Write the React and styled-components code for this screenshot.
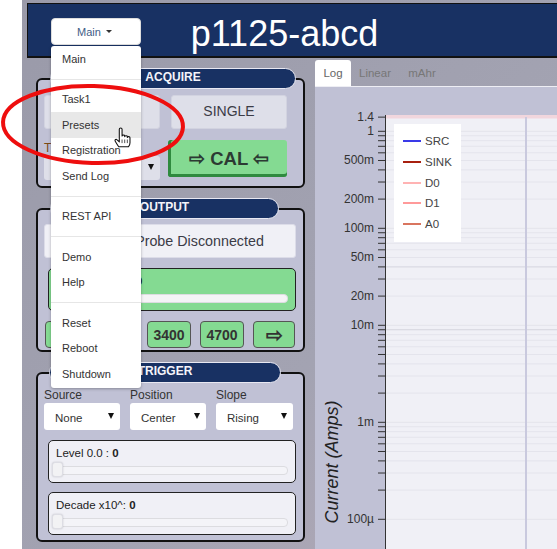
import React from "react";
import styled, { createGlobalStyle } from "styled-components";

const Global = createGlobalStyle`
  html, body { margin: 0; padding: 0; background: #fff; }
  * { box-sizing: border-box; }
  body { font-family: "Liberation Sans", Arial, sans-serif; }
`;

const Page = styled.div`
  position: relative;
  width: 557px;
  height: 549px;
  overflow: hidden;
  background: #fff;
  padding-left: 22px;
`;
const Shell = styled.div`
  width: 535px;
  height: 549px;
  padding: 3px 0 0 5px;
  background: linear-gradient(135deg, #9a9aa9 0%, #a3a3b2 60%, #b4aab8 100%);
  display: flex;
  flex-direction: column;
`;
const Header = styled.header`
  height: 55px;
  flex: none;
  background: #183163;
  border: 1px solid #111;
  border-right: none;
  border-bottom-width: 2px;
  display: flex;
  align-items: center;
  justify-content: center;
  padding: 8px 16px 0 0;
`;
const Title = styled.h1`
  margin: 0;
  font-weight: 400;
  font-size: 36px;
  color: #fff;
`;
const Columns = styled.div`
  flex: 1;
  display: flex;
  min-height: 0;
`;
const Sidebar = styled.aside`
  width: 288px;
  flex: none;
  padding: 20px 0 0 9px;
  display: flex;
  flex-direction: column;
  gap: 20px;
`;
const Panel = styled.section`
  width: 269px;
  height: ${(p) => p.$h}px;
  background: #c0c1d5;
  border: 2px solid #111;
  border-radius: 6px;
  padding: 0 7px 0 6px;
  display: flex;
  flex-direction: column;
`;
const PanelTitle = styled.div`
  flex: none;
  width: ${(p) => p.$w}px;
  height: 21px;
  margin: -12px 0 1px ${(p) => p.$left}px;
  background: #183163;
  border: 1px solid #e8e8f2;
  border-radius: 10.5px;
  color: #f4f4fa;
  font-size: 12px;
  font-weight: 700;
  line-height: 17px;
  text-align: center;
`;
const AcquireGrid = styled.div`
  display: grid;
  grid-template-columns: 116px 116px;
  column-gap: 11px;
  margin-top: 5px;
`;
const GrayButton = styled.div`
  height: 34px;
  background: #dedfe9;
  border: 1px solid #d2d3e0;
  border-radius: 3px;
  color: #3b3b46;
  font-size: 14px;
  padding-bottom: 2px;
  display: flex;
  align-items: center;
  justify-content: center;
`;
const Field = styled.div`
  display: flex;
  flex-direction: column;
`;
const AcquireField = styled(Field)`
  margin-top: 11px;
`;
const Label = styled.label`
  font-size: 12px;
  line-height: 16px;
  height: 16px;
  color: ${(p) => p.$color || "#333"};
`;
const Select = styled.div`
  position: relative;
  width: ${(p) => p.$w || 116}px;
  height: ${(p) => p.$h || 27}px;
  background: ${(p) => p.$bg || "#fff"};
  border-radius: 3px;
  color: #333;
  font-size: 11.5px;
  padding: 2px 0 0 11px;
  display: flex;
  align-items: center;
  &::after {
    content: "";
    position: absolute;
    right: 6px;
    top: 50%;
    margin-top: -4px;
    border-left: 3.5px solid transparent;
    border-right: 3.5px solid transparent;
    border-top: 6px solid #111;
  }
`;
const CalButton = styled.div`
  width: 119px;
  height: 37px;
  margin: 11px 0 0 -3px;
  background: #84da92;
  border-radius: 3px;
  box-shadow: inset 3px 0 0 #2f8a3f, inset 0 -3px 0 #2f8a3f;
  color: #2c3a33;
  font-size: 18.5px;
  font-weight: 700;
  display: flex;
  align-items: center;
  justify-content: center;
  padding-left: 3px;
`;
const StatusBox = styled.div`
  width: 252px;
  height: 34px;
  margin-top: 4px;
  background: #f0f0f6;
  border: 1px solid #dcdce8;
  border-radius: 3px;
  color: #3b3b46;
  font-size: 14.3px;
  display: flex;
  align-items: center;
  justify-content: center;
  padding-left: 59px;
`;
const SliderCard = styled.div`
  position: relative;
  width: 248px;
  height: 43px;
  margin: ${(p) => p.$mt}px 0 0 4px;
  flex: none;
  background: ${(p) => (p.$green ? "#84da92" : "#f0f0f6")};
  border: 1px solid #222;
  border-radius: 5px;
  padding: 6px 7px 0 7px;
  font-size: 11.5px;
  line-height: 13px;
  color: #222;
  b { font-weight: 700; }
`;
const Track = styled.div`
  margin-top: 6px;
  height: 9px;
  background: ${(p) => (p.$green ? "#f4f4f6" : "#f4f4f8")};
  border: 1px solid #dcdce0;
  border-radius: 4px;
`;
const Thumb = styled.div`
  position: absolute;
  left: 3px;
  bottom: 5px;
  width: 11px;
  height: 15px;
  background: #f2f2f4;
  border: 1px solid #dddde4;
  border-radius: 3px;
  box-shadow: 0 0 2px rgba(0, 0, 0, 0.18);
`;
const ButtonRow = styled.div`
  display: flex;
  gap: 9px;
  margin: 10px 0 0 1px;
`;
const GreenButton = styled.div`
  width: ${(p) => p.$w}px;
  height: 27px;
  background: #84da92;
  border: 1px solid #555;
  border-radius: 4px;
  color: #333;
  font-weight: 700;
  font-size: ${(p) => (p.$arrow ? 20 : 14)}px;
  display: flex;
  align-items: center;
  justify-content: center;
`;
const TriggerGrid = styled.div`
  display: flex;
  gap: 10px;
  margin-top: 3px;
`;
const PlotColumn = styled.main`
  flex: 1;
  min-width: 0;
  display: flex;
  flex-direction: column;
`;
const Tabs = styled.nav`
  flex: none;
  height: 29px;
  padding-top: 2px;
  display: flex;
  border-bottom: 1px solid #eeeef4;
`;
const Tab = styled.div`
  height: 26px;
  width: ${(p) => p.$w}px;
  font-size: 11.5px;
  display: flex;
  align-items: center;
  justify-content: center;
  color: ${(p) => (p.$active ? "#666" : "#777")};
  background: ${(p) => (p.$active ? "#fff" : "transparent")};
  border-radius: 3px 3px 0 0;
`;
const PlotArea = styled.div`
  position: relative;
  flex: 1;
  background: #c0c1d5;
  min-height: 0;
`;
const Chart = styled.svg`
  display: block;
  width: 242px;
  height: 462px;
`;
const Legend = styled.div`
  position: absolute;
  left: 79px;
  top: 37px;
  width: 67px;
  height: 118px;
  background: #fff;
  padding: 7px 0 0 9px;
  display: flex;
  flex-direction: column;
`;
const LegendRow = styled.div`
  height: 20.7px;
  display: flex;
  align-items: center;
  gap: 4px;
  font-size: 11.5px;
  color: #444;
`;
const Swatch = styled.span`
  width: 18px;
  height: 2px;
  background: ${(p) => p.$c};
`;
const Dropdown = styled.div`
  position: absolute;
  left: 51px;
  top: 18px;
  width: 90px;
  z-index: 2;
`;
const MainButton = styled.div`
  height: 27px;
  background: #fff;
  border: 1px solid #ddd;
  border-radius: 4px;
  color: #3f5d86;
  font-size: 11px;
  padding-right: 3px;
  display: flex;
  align-items: center;
  justify-content: center;
  gap: 5px;
  &::after {
    content: "";
    border-left: 3.5px solid transparent;
    border-right: 3.5px solid transparent;
    border-top: 3.5px solid #333;
  }
`;
const Menu = styled.div`
  margin-top: 1px;
  height: 342px;
  background: #fff;
  border-radius: 3px;
  box-shadow: 0 1px 3px rgba(0, 0, 0, 0.3);
`;
const MenuItem = styled.div`
  height: 25.5px;
  padding-left: 11px;
  font-size: 11px;
  color: #333;
  display: flex;
  align-items: center;
  background: ${(p) => (p.$active ? "#e8e8e8" : "transparent")};
`;
const Divider = styled.div`
  height: 1px;
  margin: 7px 0;
  background: #e6e6e6;
`;
const Overlay = styled.svg`
  position: absolute;
  left: 0;
  top: 80px;
  width: 190px;
  height: 90px;
  z-index: 3;
  pointer-events: none;
`;

const y = (v) => 131.3 - 97 * Math.log10(v) - 87;
const ticks = [1.4];
for (const d of [1, 0.1, 0.01, 0.001, 0.0001]) {
  for (let k = 1; k <= 9; k++) {
    const v = k * d;
    if (v <= 1.0001 && y(v) < 462) ticks.push(v);
  }
}
const labels = [
  ["1.4", 1.4], ["1", 1], ["500m", 0.5], ["200m", 0.2], ["100m", 0.1],
  ["50m", 0.05], ["20m", 0.02], ["10m", 0.01], ["1m", 0.001], ["100µ", 0.0001],
];
const legend = [
  ["SRC", "#3a3ae8"], ["SINK", "#a8200f"], ["D0", "#ffb3b3"],
  ["D1", "#ff9a9a"], ["A0", "#d9755f"],
];

function Hand() {
  return (
    <g transform="translate(114.5 47.5) scale(1.2)" fill="#fff" stroke="#111" strokeWidth=".9" strokeLinejoin="round">
      <path d="M4 1.5c0-1.4 2.3-1.4 2.3 0V7c0-1 2.2-1 2.2 0v.6c0-1 2.2-1 2.2 0v.7c0-1 2.2-.9 2.2.2v4.2c0 1.6-.6 2.6-1.2 3.3H3.5C2.8 15 1.8 13.4.6 11.4c-.7-1.2.8-2.1 1.6-1.1L4 12z" />
      <path d="M6.3 10v3M8.5 10v3M10.7 10v3" fill="none" strokeWidth=".6" />
    </g>
  );
}

export default function App() {
  return (
    <Page>
      <Global />
      <Shell>
        <Header>
          <Title>p1125-abcd</Title>
        </Header>
        <Columns>
          <Sidebar>
            <Panel $h={110}>
              <PanelTitle $w={246} $left={6}>ACQUIRE</PanelTitle>
              <AcquireGrid>
                <GrayButton>RUN</GrayButton>
                <GrayButton>SINGLE</GrayButton>
                <AcquireField>
                  <Label $color="#7a4a14">Trace</Label>
                  <Select $h={24} $bg="#dedfe9">None</Select>
                </AcquireField>
                <CalButton>⇨ CAL ⇦</CalButton>
              </AcquireGrid>
            </Panel>
            <Panel $h={144}>
              <PanelTitle $w={229} $left={6}>OUTPUT</PanelTitle>
              <StatusBox>Probe Disconnected</StatusBox>
              <SliderCard $green $mt={10}>
                Voltage 0.000 : <b>0</b>
                <Track $green />
                <Thumb />
              </SliderCard>
              <ButtonRow>
                <GreenButton $w={40} $arrow>⇦</GreenButton>
                <GreenButton $w={44}>1800</GreenButton>
                <GreenButton $w={44}>3400</GreenButton>
                <GreenButton $w={44}>4700</GreenButton>
                <GreenButton $w={42} $arrow>⇨</GreenButton>
              </ButtonRow>
            </Panel>
            <Panel $h={170}>
              <PanelTitle $w={232} $left={5}>TRIGGER</PanelTitle>
              <TriggerGrid>
                <Field>
                  <Label>Source</Label>
                  <Select $w={76}>None</Select>
                </Field>
                <Field>
                  <Label>Position</Label>
                  <Select $w={76}>Center</Select>
                </Field>
                <Field>
                  <Label>Slope</Label>
                  <Select $w={77}>Rising</Select>
                </Field>
              </TriggerGrid>
              <SliderCard $mt={10}>
                Level 0.0 : <b>0</b>
                <Track />
                <Thumb />
              </SliderCard>
              <SliderCard $mt={9}>
                Decade x10^: <b>0</b>
                <Track />
                <Thumb />
              </SliderCard>
            </Panel>
          </Sidebar>
          <PlotColumn>
            <Tabs>
              <Tab $w={36} $active>Log</Tab>
              <Tab $w={48}>Linear</Tab>
              <Tab $w={46}>mAhr</Tab>
            </Tabs>
            <PlotArea>
              <Chart viewBox="0 0 242 462">
                <rect x="70" y="30" width="172" height="432" fill="#f0f0f6" />
                {ticks.map((v) => (
                  <line key={"g" + v} x1="70" x2="242" y1={y(v)} y2={y(v)} stroke={Math.abs(v - 0.04) < 1e-6 || Math.abs(v - 0.009) < 1e-6 ? "#d4d4de" : "#e4e4ec"} strokeWidth="1" />
                ))}
                <rect x="70" y="28" width="172" height="3.5" fill="#f1d6dd" />
                <line x1="211" x2="211" y1="30" y2="462" stroke="#c9c9de" strokeWidth="2" />
                <line x1="70.5" x2="70.5" y1="28" y2="462" stroke="#333" strokeWidth="1" />
                {ticks.map((v) => (
                  <line key={"t" + v} x1="63" x2="71" y1={y(v)} y2={y(v)} stroke="#333" strokeWidth="1" />
                ))}
                {labels.map(([t, v]) => (
                  <text key={t} x="59" y={y(v) + 3.5} textAnchor="end" fontSize="12" fill="#333" fontFamily="'Liberation Sans', sans-serif">{t}</text>
                ))}
                <text transform="translate(23 375) rotate(-90)" textAnchor="middle" fontSize="18" fontStyle="italic" fill="#222" fontFamily="'Liberation Sans', sans-serif">Current (Amps)</text>
              </Chart>
              <Legend>
                {legend.map(([t, c]) => (
                  <LegendRow key={t}>
                    <Swatch $c={c} />
                    {t}
                  </LegendRow>
                ))}
              </Legend>
            </PlotArea>
          </PlotColumn>
        </Columns>
      </Shell>
      <Dropdown>
        <MainButton>Main</MainButton>
        <Menu>
          <MenuItem>Main</MenuItem>
          <Divider />
          <MenuItem>Task1</MenuItem>
          <MenuItem $active>Presets</MenuItem>
          <MenuItem>Registration</MenuItem>
          <MenuItem>Send Log</MenuItem>
          <Divider />
          <MenuItem>REST API</MenuItem>
          <Divider />
          <MenuItem>Demo</MenuItem>
          <MenuItem>Help</MenuItem>
          <Divider />
          <MenuItem>Reset</MenuItem>
          <MenuItem>Reboot</MenuItem>
          <MenuItem>Shutdown</MenuItem>
        </Menu>
      </Dropdown>
      <Overlay viewBox="0 0 190 90">
        <ellipse cx="93" cy="44.5" rx="90" ry="38.5" fill="none" stroke="#ee0e0e" strokeWidth="4" transform="rotate(1.5 93 44.5)" />
        <Hand />
      </Overlay>
    </Page>
  );
}
